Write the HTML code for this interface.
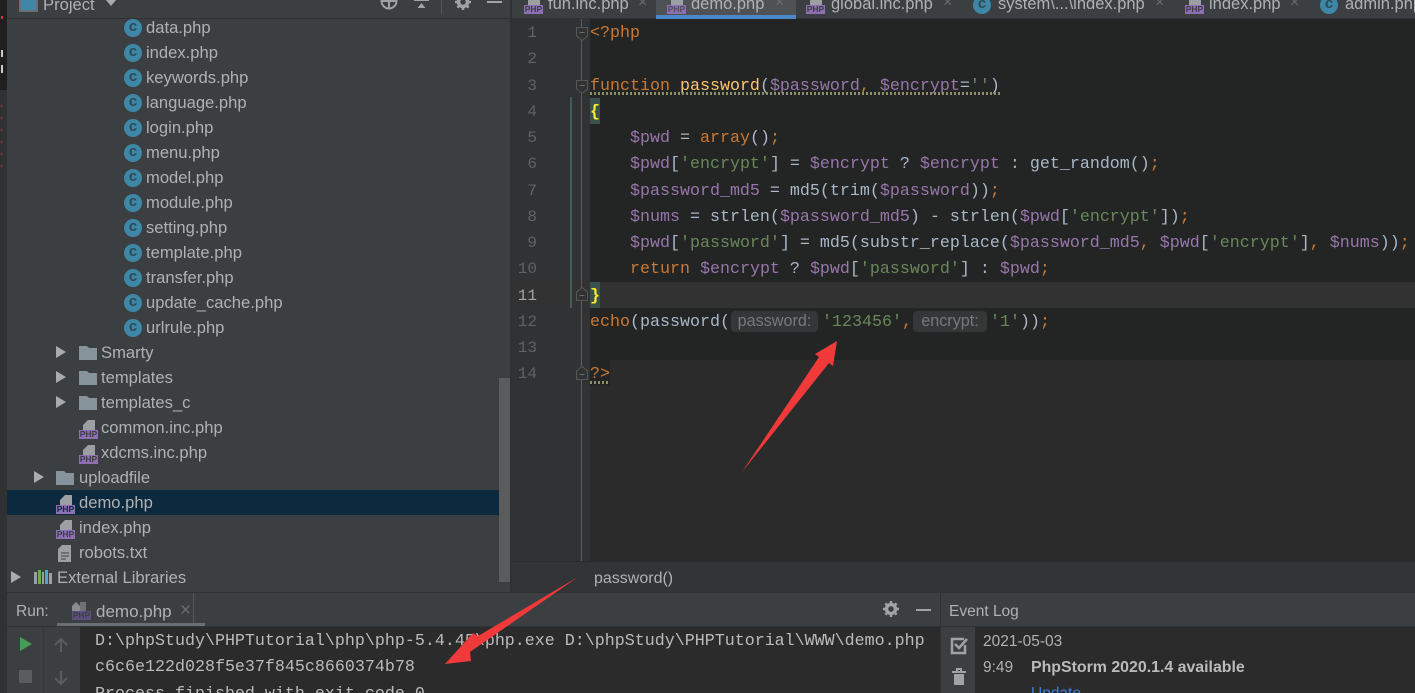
<!DOCTYPE html>
<html><head><meta charset="utf-8"><style>
html,body{margin:0;padding:0;background:#3c3f41}
#r{position:relative;width:1415px;height:693px;overflow:hidden;background:#3c3f41;font-family:"Liberation Sans",sans-serif}
.a{position:absolute}
.t{position:absolute;font-size:16.6px;line-height:25px;height:25px;color:#afb1b3;white-space:nowrap;margin-top:-1px}
.c{position:absolute;width:18px;height:18px;border-radius:50%;background:#3f87a6;color:#2f4a57;font:bold 15px/16px "Liberation Sans",sans-serif;text-align:center}
.p{position:absolute;width:19px;height:19px}
.p i{position:absolute;left:0;bottom:0;width:19px;height:9px;background:#8e6fb5;color:#3c3f41;font:bold 8.5px/9px "Liberation Sans",sans-serif;text-align:center;font-style:normal;overflow:hidden}
.p svg{position:absolute;left:4px;top:0}
.f{position:absolute;width:18px;height:14px}
.tr{position:absolute;width:0;height:0;border-left:10px solid #a9abad;border-top:6px solid transparent;border-bottom:6px solid transparent}
.l{position:absolute;left:590px;height:26px;font:16.67px/26px "Liberation Mono",monospace;color:#a9b7c6;white-space:pre;margin-top:2px}
.n{position:absolute;left:512px;width:25px;text-align:right;font:16px/26px "Liberation Mono",monospace;color:#606366;margin-top:1px}
.k{color:#cc7832}.v{color:#9876aa}.s{color:#6a8759}.g{color:#ffc66d}
.h{position:absolute;top:311px;height:21px;background:#343637;border-radius:4px;color:#787878;font:16.2px/21px "Liberation Sans",sans-serif;text-align:center;white-space:nowrap}
.sq{position:absolute;height:3px;background:repeating-linear-gradient(90deg,#8f8f62 0 2px,transparent 2px 4px)}
.tab{position:absolute;top:-8px;font-size:16.5px;line-height:25px;color:#afb1b3;white-space:nowrap}
.x{position:absolute;top:-8px;font:16px/22px "Liberation Sans",sans-serif;color:#6a6d70}
.o{position:absolute;font:16.67px/26px "Liberation Mono",monospace;color:#bbbbbb;white-space:pre;left:95px}
.fold{position:absolute;left:576px;width:12px;height:14px}
</style></head><body><div id="r">

<!-- left strip -->
<div class="a" style="left:0;top:0;width:7px;height:693px;background:#2f3133"></div>
<div class="a" style="left:0;top:0;width:7px;height:90px;background:#1f1f1f"></div>
<div class="a" style="left:1px;top:50px;width:2px;height:7px;background:#ccc"></div>
<div class="a" style="left:1px;top:65px;width:2px;height:8px;background:#ccc"></div>
<div class="a" style="left:1px;top:16px;width:2px;height:3px;background:#d33"></div>
<div class="a" style="left:1px;top:105px;width:1px;height:70px;background:repeating-linear-gradient(180deg,#a33 0 2px,transparent 2px 12px)"></div>

<!-- tree header -->
<div class="a" style="left:7px;top:18px;width:503px;height:1px;background:#2f3133"></div>
<div class="a" style="left:19px;top:-6px;width:15px;height:14px;border:2px solid #6b7073;background:#3f87a6"></div>
<div class="t" style="left:43px;top:-7px;font-size:16.6px">Project</div>
<div class="a" style="left:106px;top:0;width:0;height:0;border-top:6px solid #a9abad;border-left:5px solid transparent;border-right:5px solid transparent"></div>
<svg class="a" style="left:379px;top:-8px" width="20" height="20"><circle cx="10" cy="9" r="7.5" fill="none" stroke="#a0a2a4" stroke-width="2"/><path d="M10 1v16M2 9h16" stroke="#a0a2a4" stroke-width="2"/></svg>
<svg class="a" style="left:413px;top:-1px" width="18" height="12"><path d="M1 1h15" stroke="#a0a2a4" stroke-width="2"/><path d="M8.500 4l4 5h-8z" fill="#a0a2a4"/></svg>
<div class="a" style="left:441px;top:0;width:1px;height:14px;background:#55585a"></div>
<svg class="a" style="left:454px;top:-7px" width="18" height="18" viewBox="0 0 18 18"><circle cx="9" cy="9" r="4.500" fill="none" stroke="#a0a2a4" stroke-width="3.500"/><path d="M9 1v16M1 9h16M3.400 3.400l11.200 11.200M14.600 3.400L3.400 14.600" stroke="#a0a2a4" stroke-width="2.500" stroke-dasharray="3 10"/></svg>
<div class="a" style="left:487px;top:1px;width:15px;height:2px;background:#a0a2a4"></div>

<!-- selected row -->
<div class="a" style="left:7px;top:490px;width:503px;height:25px;background:#0d293e"></div>
<!-- scrollbar -->
<div class="a" style="left:499px;top:378px;width:11px;height:204px;background:#595b5d"></div>

<!-- C files -->
<div class="c" style="left:124px;top:19px">c</div><div class="t" style="left:146px;top:16px">data.php</div>
<div class="c" style="left:124px;top:44px">c</div><div class="t" style="left:146px;top:41px">index.php</div>
<div class="c" style="left:124px;top:69px">c</div><div class="t" style="left:146px;top:66px">keywords.php</div>
<div class="c" style="left:124px;top:94px">c</div><div class="t" style="left:146px;top:91px">language.php</div>
<div class="c" style="left:124px;top:119px">c</div><div class="t" style="left:146px;top:116px">login.php</div>
<div class="c" style="left:124px;top:144px">c</div><div class="t" style="left:146px;top:141px">menu.php</div>
<div class="c" style="left:124px;top:169px">c</div><div class="t" style="left:146px;top:166px">model.php</div>
<div class="c" style="left:124px;top:194px">c</div><div class="t" style="left:146px;top:191px">module.php</div>
<div class="c" style="left:124px;top:219px">c</div><div class="t" style="left:146px;top:216px">setting.php</div>
<div class="c" style="left:124px;top:244px">c</div><div class="t" style="left:146px;top:241px">template.php</div>
<div class="c" style="left:124px;top:269px">c</div><div class="t" style="left:146px;top:266px">transfer.php</div>
<div class="c" style="left:124px;top:294px">c</div><div class="t" style="left:146px;top:291px">update_cache.php</div>
<div class="c" style="left:124px;top:319px">c</div><div class="t" style="left:146px;top:316px">urlrule.php</div>

<!-- folders -->
<div class="tr" style="left:56px;top:346px"></div>
<svg class="f" style="left:79px;top:346px"><path d="M0 0h8l2 2h8v12H0z" fill="#87939a"/></svg>
<div class="t" style="left:101px;top:341px">Smarty</div>
<div class="tr" style="left:56px;top:371px"></div>
<svg class="f" style="left:79px;top:371px"><path d="M0 0h8l2 2h8v12H0z" fill="#87939a"/></svg>
<div class="t" style="left:101px;top:366px">templates</div>
<div class="tr" style="left:56px;top:396px"></div>
<svg class="f" style="left:79px;top:396px"><path d="M0 0h8l2 2h8v12H0z" fill="#87939a"/></svg>
<div class="t" style="left:101px;top:391px">templates_c</div>

<div class="p" style="left:79px;top:420px"><svg width="12" height="10"><path d="M5 0h7v10H0V5z" fill="#9da0a2"/></svg><i>PHP</i></div>
<div class="t" style="left:101px;top:416px">common.inc.php</div>
<div class="p" style="left:79px;top:445px"><svg width="12" height="10"><path d="M5 0h7v10H0V5z" fill="#9da0a2"/></svg><i>PHP</i></div>
<div class="t" style="left:101px;top:441px">xdcms.inc.php</div>

<div class="tr" style="left:34px;top:471px"></div>
<svg class="f" style="left:56px;top:471px"><path d="M0 0h8l2 2h8v12H0z" fill="#87939a"/></svg>
<div class="t" style="left:79px;top:466px">uploadfile</div>

<div class="p" style="left:56px;top:495px"><svg width="12" height="10"><path d="M5 0h7v10H0V5z" fill="#9da0a2"/></svg><i style="color:#0d293e">PHP</i></div>
<div class="t" style="left:79px;top:491px">demo.php</div>
<div class="p" style="left:56px;top:520px"><svg width="12" height="10"><path d="M5 0h7v10H0V5z" fill="#9da0a2"/></svg><i>PHP</i></div>
<div class="t" style="left:79px;top:516px">index.php</div>
<svg class="a" style="left:58px;top:545px" width="15" height="17"><path d="M4 0h9v17H0V4z" fill="#9da0a2"/><path d="M3 8h8M3 11h8M3 14h5" stroke="#3c3f41"/></svg>
<div class="t" style="left:79px;top:541px">robots.txt</div>

<div class="tr" style="left:11px;top:571px"></div>
<svg class="a" style="left:34px;top:570px" width="18" height="14"><rect x="0" y="2" width="3" height="12" fill="#9da0a2"/><rect x="4" y="0" width="3" height="14" fill="#6cae4c"/><rect x="8" y="2" width="2" height="12" fill="#9da0a2"/><rect x="11" y="0" width="3" height="14" fill="#4fa8c9"/><rect x="15" y="3" width="3" height="11" fill="#9da0a2"/></svg>
<div class="t" style="left:57px;top:566px">External Libraries</div>

<!-- divider tree/editor -->
<div class="a" style="left:510px;top:0;width:2px;height:592px;background:#2f3133"></div>

<!-- tab bar -->
<div class="a" style="left:512px;top:0;width:903px;height:18px;background:#3c3f41"></div>
<div class="a" style="left:656px;top:0;width:140px;height:15px;background:#4e5254"></div>
<div class="a" style="left:656px;top:15px;width:140px;height:4px;background:#4a88c7"></div>
<div class="a" style="left:512px;top:18px;width:144px;height:1px;background:#323232"></div>
<div class="a" style="left:796px;top:18px;width:619px;height:1px;background:#323232"></div>

<div class="p" style="left:524px;top:-5px"><svg width="12" height="10"><path d="M5 0h7v10H0V5z" fill="#9da0a2"/></svg><i>PHP</i></div>
<div class="tab" style="left:548px">fun.inc.php</div><div class="x" style="left:638px">×</div>
<div class="p" style="left:667px;top:-5px"><svg width="12" height="10"><path d="M5 0h7v10H0V5z" fill="#9da0a2"/></svg><i style="color:#4e5254">PHP</i></div>
<div class="tab" style="left:691px">demo.php</div><div class="x" style="left:775px">×</div>
<div class="p" style="left:806px;top:-5px"><svg width="12" height="10"><path d="M5 0h7v10H0V5z" fill="#9da0a2"/></svg><i>PHP</i></div>
<div class="tab" style="left:831px">global.inc.php</div><div class="x" style="left:943px">×</div>
<div class="c" style="left:973px;top:-4px">c</div>
<div class="tab" style="left:998px">system\...\index.php</div><div class="x" style="left:1155px">×</div>
<div class="p" style="left:1185px;top:-5px"><svg width="12" height="10"><path d="M5 0h7v10H0V5z" fill="#9da0a2"/></svg><i>PHP</i></div>
<div class="tab" style="left:1209px">index.php</div><div class="x" style="left:1290px">×</div>
<div class="c" style="left:1320px;top:-4px">c</div>
<div class="tab" style="left:1345px">admin.php</div>

<!-- editor -->
<div class="a" style="left:512px;top:19px;width:903px;height:543px;background:#2b2b2b"></div>
<div class="a" style="left:512px;top:19px;width:78px;height:543px;background:#303234"></div>
<div class="a" style="left:590px;top:19px;width:825px;height:341px;background:#232525"></div>
<div class="a" style="left:590px;top:360px;width:20px;height:26px;background:#232525"></div>
<div class="a" style="left:512px;top:282px;width:903px;height:26px;background:#323232"></div>
<div class="a" style="left:581px;top:19px;width:1px;height:543px;background:#5a5c5e"></div>
<div class="a" style="left:570px;top:97px;width:2px;height:211px;background:#3f5f55"></div>
<div class="a" style="left:590px;top:98px;width:10px;height:26px;background:#3b514d"></div>
<div class="a" style="left:590px;top:282px;width:10px;height:26px;background:#3b514d"></div>

<svg class="fold" style="top:27px" viewBox="0 0 12 14"><path d="M.5 .5h11v8.500l-5.500 4.500-5.500-4.500z" fill="#303234" stroke="#55585a"/><path d="M3.500 5.500h5" stroke="#6a6d70"/></svg>
<svg class="fold" style="top:80px" viewBox="0 0 12 14"><path d="M.5 .5h11v8.500l-5.500 4.500-5.500-4.500z" fill="#303234" stroke="#55585a"/><path d="M3.500 5.500h5" stroke="#6a6d70"/></svg>
<svg class="fold" style="top:287px" viewBox="0 0 12 14"><path d="M.5 13.500h11v-8.500l-5.500-4.500-5.500 4.500z" fill="#323232" stroke="#55585a"/><path d="M3.500 8.500h5" stroke="#6a6d70"/></svg>
<svg class="fold" style="top:366px" viewBox="0 0 12 14"><path d="M.5 13.500h11v-8.500l-5.500-4.500-5.500 4.500z" fill="#303234" stroke="#55585a"/><path d="M3.500 8.500h5" stroke="#6a6d70"/></svg>

<div class="n" style="top:19px">1</div>
<div class="n" style="top:45px">2</div>
<div class="n" style="top:72px">3</div>
<div class="n" style="top:98px">4</div>
<div class="n" style="top:124px">5</div>
<div class="n" style="top:150px">6</div>
<div class="n" style="top:177px">7</div>
<div class="n" style="top:203px">8</div>
<div class="n" style="top:229px">9</div>
<div class="n" style="top:255px">10</div>
<div class="n" style="top:282px;color:#a4a3a3">11</div>
<div class="n" style="top:308px">12</div>
<div class="n" style="top:334px">13</div>
<div class="n" style="top:360px">14</div>

<div class="l k" style="top:19px">&lt;?php</div>
<div class="l" style="top:72px"><span class="k">function</span> <span class="g">password</span>(<span class="v">$password</span><span class="k">,</span> <span class="v">$encrypt</span>=<span class="s">''</span>)</div>
<div class="sq" style="left:590px;top:92px;width:410px"></div>
<div class="l" style="top:98px;color:#ffef28;font-weight:bold">{</div>
<div class="l" style="top:124px">    <span class="v">$pwd</span> = <span class="k">array</span>()<span class="k">;</span></div>
<div class="l" style="top:150px">    <span class="v">$pwd</span>[<span class="s">'encrypt'</span>] = <span class="v">$encrypt</span> ? <span class="v">$encrypt</span> : get_random()<span class="k">;</span></div>
<div class="l" style="top:177px">    <span class="v">$password_md5</span> = md5(trim(<span class="v">$password</span>))<span class="k">;</span></div>
<div class="l" style="top:203px">    <span class="v">$nums</span> = strlen(<span class="v">$password_md5</span>) - strlen(<span class="v">$pwd</span>[<span class="s">'encrypt'</span>])<span class="k">;</span></div>
<div class="l" style="top:229px">    <span class="v">$pwd</span>[<span class="s">'password'</span>] = md5(substr_replace(<span class="v">$password_md5</span><span class="k">,</span> <span class="v">$pwd</span>[<span class="s">'encrypt'</span>]<span class="k">,</span> <span class="v">$nums</span>))<span class="k">;</span></div>
<div class="l" style="top:255px">    <span class="k">return</span> <span class="v">$encrypt</span> ? <span class="v">$pwd</span>[<span class="s">'password'</span>] : <span class="v">$pwd</span><span class="k">;</span></div>
<div class="l" style="top:282px;color:#ffef28;font-weight:bold">}</div>
<div class="l" style="top:308px"><span class="k">echo</span>(password(</div>
<div class="h" style="left:731px;width:87px">password:</div>
<div class="l s" style="top:308px;left:822px">'123456'<span class="k">,</span></div>
<div class="h" style="left:913px;width:74px">encrypt:</div>
<div class="l" style="top:308px;left:990px"><span class="s">'1'</span>))<span class="k">;</span></div>
<div class="l k" style="top:360px">?&gt;</div>
<div class="sq" style="left:590px;top:381px;width:20px"></div>

<!-- breadcrumb -->
<div class="a" style="left:512px;top:561px;width:903px;height:31px;background:#323436"></div>
<div class="a" style="left:512px;top:561px;width:903px;height:1px;background:#2b2b2b"></div>
<div class="a" style="left:594px;top:566px;font-size:16px;line-height:25px;color:#afb1b3">password()</div>

<!-- bottom panels -->
<div class="a" style="left:7px;top:592px;width:1408px;height:1px;background:#2f3133"></div>
<div class="a" style="left:7px;top:593px;width:1408px;height:34px;background:#3c3f41"></div>
<div class="a" style="left:7px;top:626px;width:1408px;height:1px;background:#323232"></div>
<div class="a" style="left:16px;top:600px;font-size:15.500px;line-height:24px;color:#afb1b3">Run:</div>
<div class="p" style="left:72px;top:601px"><svg width="14" height="10" style="left:0"><path d="M0 5l4-4 4 4v5H0z" fill="#8a8d8f"/><rect x="8" y="1" width="6" height="9" fill="#6f7274"/></svg><i style="background:#5e5080;color:#3c3f41">PHP</i></div>
<div class="a" style="left:96px;top:600px;font-size:17px;line-height:24px;color:#afb1b3">demo.php</div>
<div class="a" style="left:180px;top:600px;font-size:19px;line-height:22px;color:#6a6d70">×</div>
<div class="a" style="left:193px;top:593px;width:1px;height:33px;background:#55585a"></div>
<div class="a" style="left:57px;top:623px;width:148px;height:3px;background:#6b6f73"></div>
<svg class="a" style="left:882px;top:600px" width="18" height="18" viewBox="0 0 18 18"><circle cx="9" cy="9" r="4.500" fill="none" stroke="#a0a2a4" stroke-width="3.500"/><path d="M9 1v16M1 9h16M3.400 3.400l11.200 11.200M14.600 3.400L3.400 14.600" stroke="#a0a2a4" stroke-width="2.500" stroke-dasharray="3 10"/></svg>
<div class="a" style="left:916px;top:609px;width:15px;height:2px;background:#a0a2a4"></div>
<div class="a" style="left:940px;top:593px;width:1px;height:100px;background:#2f3133"></div>
<div class="a" style="left:949px;top:600px;font-size:15.500px;line-height:24px;color:#afb1b3">Event Log</div>

<!-- run console -->
<div class="a" style="left:7px;top:627px;width:36px;height:66px;background:#3c3f41"></div>
<div class="a" style="left:43px;top:627px;width:37px;height:66px;background:#3c3f41;border-left:1px solid #35383a;box-sizing:border-box"></div>
<div class="a" style="left:80px;top:627px;width:860px;height:66px;background:#2b2b2b"></div>
<svg class="a" style="left:19px;top:636px" width="14" height="16"><path d="M1 1l12 7-12 7z" fill="#499c54"/></svg>
<div class="a" style="left:19px;top:670px;width:13px;height:13px;background:#5a5d5f"></div>
<svg class="a" style="left:53px;top:637px" width="16" height="16"><path d="M8 15V2M2 8l6-6 6 6" fill="none" stroke="#5a5d5f" stroke-width="2"/></svg>
<svg class="a" style="left:53px;top:670px" width="16" height="16"><path d="M8 1v13M2 8l6 6 6-6" fill="none" stroke="#5a5d5f" stroke-width="2"/></svg>
<div class="o" style="top:629px">D:\phpStudy\PHPTutorial\php\php-5.4.45\php.exe D:\phpStudy\PHPTutorial\WWW\demo.php</div>
<div class="o" style="top:655px">c6c6e122d028f5e37f845c8660374b78</div>
<div class="o" style="top:682px">Process finished with exit code 0</div>

<!-- event log -->
<div class="a" style="left:941px;top:627px;width:34px;height:66px;background:#3c3f41"></div>
<div class="a" style="left:975px;top:627px;width:440px;height:66px;background:#2b2b2b"></div>
<svg class="a" style="left:950px;top:636px" width="19" height="19"><path d="M15 9v8H2V3h12" fill="none" stroke="#a0a2a4" stroke-width="2.500"/><path d="M5 8l4 4 8-9" fill="none" stroke="#a0a2a4" stroke-width="2.500"/></svg>
<svg class="a" style="left:951px;top:668px" width="16" height="18"><path d="M1 4h14M6 3V1h4v2" stroke="#a0a2a4" stroke-width="2" fill="none"/><path d="M3 6h10v11H3z" fill="#a0a2a4"/></svg>
<div class="a" style="left:983px;top:630px;font-size:15.500px;line-height:24px;color:#afb1b3">2021-05-03</div>
<div class="a" style="left:983px;top:656px;font-size:15.500px;line-height:24px;color:#afb1b3">9:49</div>
<div class="a" style="left:1031px;top:656px;font-size:15.900px;line-height:24px;color:#bbbbbb;font-weight:bold">PhpStorm 2020.1.4 available</div>
<div class="a" style="left:1031px;top:682px;font-size:15.500px;line-height:24px;color:#3a7dd8">Update</div>

<!-- red arrows -->
<svg class="a" style="left:0;top:0" width="1415" height="693">
<polygon points="837,341 833,366 829,363 742,472 819,357 815,354" fill="#f03a3a"/>
<polygon points="445,664 473,633 478,636 578,577 470,652 471,661" fill="#f03a3a"/>
</svg>
</div></body></html>
